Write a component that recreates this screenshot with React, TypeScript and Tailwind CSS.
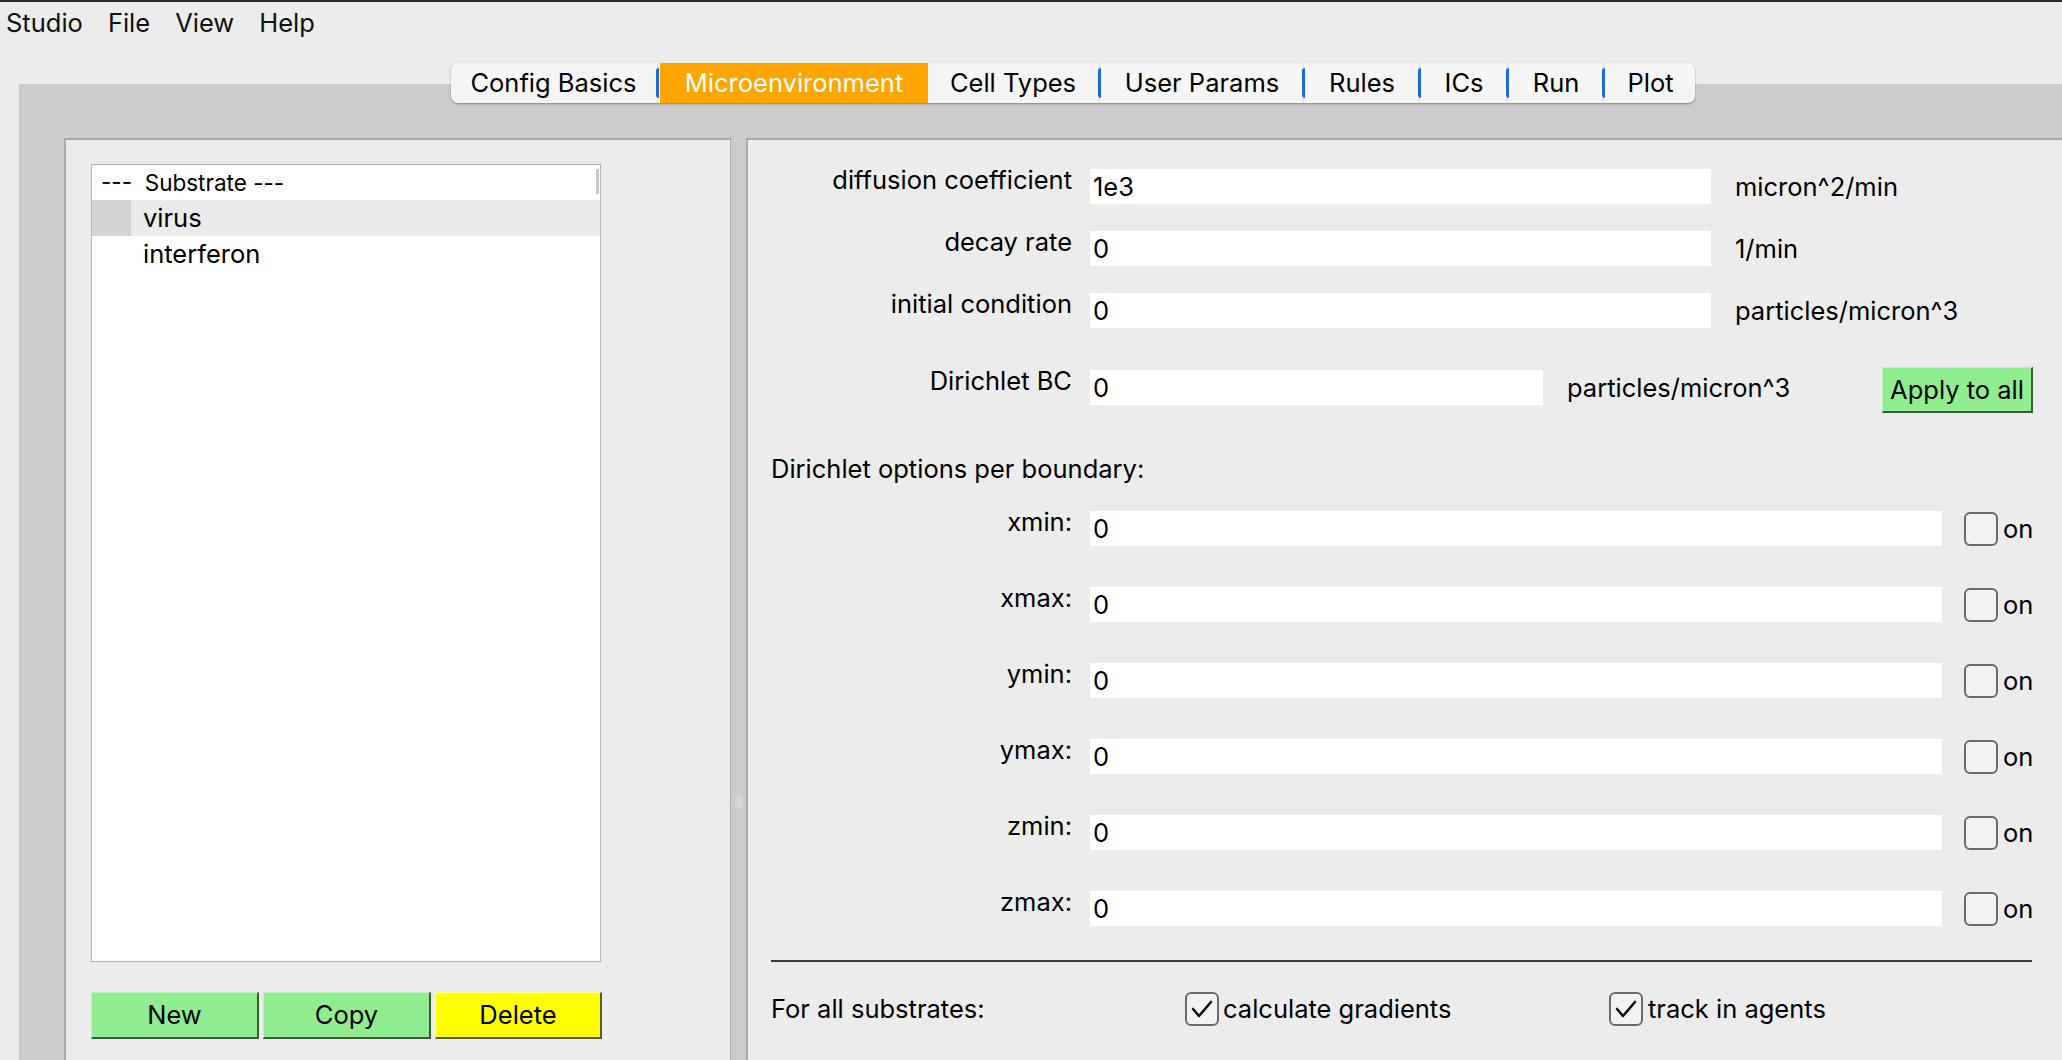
import React from "react";

function Sep() {
  return (
    <div className="w-[4px] h-full flex items-center relative">
      <div className="absolute left-[1px] top-0 bottom-0 w-px bg-[#dcdcdc]" />
      <div className="relative w-[3px] h-[30px] rounded-l-full bg-[#1d6ae0]" />
    </div>
  );
}

function Tab({ label, w, active }: { label: string; w: string; active?: boolean }) {
  return (
    <div
      className={
        "h-full flex items-center justify-center " +
        w +
        (active ? " bg-[#ffa500] text-white" : " text-black")
      }
    >
      {label}
    </div>
  );
}

function CheckBox({ checked }: { checked?: boolean }) {
  return (
    <div className="w-[34px] h-[34px] rounded-[6px] border-2 border-[#6a6a6a] bg-[#f2f2f2] flex items-center justify-center shrink-0">
      {checked ? (
        <svg width="26" height="26" viewBox="0 0 26 26">
          <polyline points="4,13 10,20 22,6" fill="none" stroke="#111" strokeWidth="2.6" strokeLinecap="round" strokeLinejoin="round" />
        </svg>
      ) : null}
    </div>
  );
}

function BoundaryRow({ label, first }: { label: string; first?: boolean }) {
  return (
    <div className={"flex items-start h-[35px] " + (first ? "mt-[28px]" : "mt-[41px]")}>
      <div className="w-[301px] text-right -mt-[3px]">{label}</div>
      <div className="ml-[18px] w-[852px] h-[35px] bg-white flex items-center pl-[3px]">0</div>
      <div className="ml-[22px] h-[35px] flex items-center">
        <CheckBox />
        <span className="ml-[5px]">on</span>
      </div>
    </div>
  );
}

export default function App() {
  return (
    <div className="w-[2062px] h-[1060px] overflow-hidden bg-[#ececec] text-black font-[family-name:Inter,'Liberation_Sans',sans-serif] text-[25.5px] leading-[28px] flex flex-col border-t-2 border-[#2b2b2b]">
      {/* Menu bar */}
      <div className="h-[61px] shrink-0 flex items-start pt-[7px] pl-[6px] gap-[25px] text-[#111]">
        <span>Studio</span>
        <span>File</span>
        <span>View</span>
        <span>Help</span>
      </div>

      {/* Tab bar */}
      <div className="relative z-10 h-[40px] -mb-[19px] shrink-0 pl-[451px] flex">
        <div className="flex h-[40px] rounded-[7px] bg-[#f5f5f5] shadow-[0_1px_2px_rgba(0,0,0,0.35)] overflow-hidden">
          <Tab label="Config Basics" w="w-[205px]" />
          <Sep />
          <Tab label="Microenvironment" w="w-[268px]" active />
          <Tab label="Cell Types" w="w-[170px]" />
          <Sep />
          <Tab label="User Params" w="w-[200px]" />
          <Sep />
          <Tab label="Rules" w="w-[112px]" />
          <Sep />
          <Tab label="ICs" w="w-[84px]" />
          <Sep />
          <Tab label="Run" w="w-[92px]" />
          <Sep />
          <Tab label="Plot" w="w-[89px]" />
        </div>
      </div>

      {/* Gray container */}
      <div className="flex-1 min-h-0 ml-[19px] bg-[#cbcbcb] pt-[54px] pl-[45px] flex">
        {/* Left panel */}
        <div className="w-[667px] shrink-0 bg-[#ececec] border-l-2 border-t-2 border-r border-[#a9a9a9] pt-[24px] pl-[25px] flex flex-col">
          <div className="w-[510px] h-[798px] bg-white border border-[#b3b3b3] flex flex-col">
            <div className="h-[35px] flex items-center pl-[9px] text-[22.5px] relative">
              <span>---&nbsp;&nbsp;Substrate ---</span>
              <div className="absolute right-[1px] top-[4px] w-[3px] h-[25px] bg-[#c6c6c6]" />
            </div>
            <div className="h-[36px] flex items-center bg-[#ebebeb]">
              <div className="w-[39px] h-full bg-[#d4d4d4]" />
              <span className="ml-[12px]">virus</span>
            </div>
            <div className="h-[36px] flex items-center pl-[51px]">interferon</div>
          </div>
          <div className="mt-[30px] flex gap-[4px]">
            <button className="w-[168px] h-[47px] bg-[#90ee90] border-t border-l border-[#b9f5b9] border-b-2 border-r-2 border-b-[#3a5a3a] border-r-[#3a5a3a] text-black">
              New
            </button>
            <button className="w-[168px] h-[47px] bg-[#90ee90] border-t border-l border-[#b9f5b9] border-b-2 border-r-2 border-b-[#3a5a3a] border-r-[#3a5a3a] text-black">
              Copy
            </button>
            <button className="w-[167px] h-[47px] bg-[#ffff00] border-t border-l border-[#ffff99] border-b-2 border-r-2 border-b-[#5c5c1a] border-r-[#5c5c1a] text-black">
              Delete
            </button>
          </div>
        </div>

        {/* Splitter */}
        <div className="w-[15px] shrink-0 flex flex-col items-center">
          <div className="mt-[657px] w-[8px] h-[13px] rounded-full bg-[#d8d8d8]" />
        </div>

        {/* Right panel */}
        <div className="flex-1 min-w-0 bg-[#ececec] border-l-2 border-t-2 border-[#a9a9a9] pl-[23px] flex flex-col">
          {/* diffusion */}
          <div className="flex items-start h-[35px] mt-[29px]">
            <div className="w-[301px] text-right -mt-[3px]">diffusion coefficient</div>
            <div className="ml-[18px] w-[621px] h-[35px] bg-white flex items-center pl-[3px]">1e3</div>
            <div className="ml-[24px] h-[35px] flex items-center">micron^2/min</div>
          </div>
          {/* decay */}
          <div className="flex items-start h-[35px] mt-[27px]">
            <div className="w-[301px] text-right -mt-[3px]">decay rate</div>
            <div className="ml-[18px] w-[621px] h-[35px] bg-white flex items-center pl-[3px]">0</div>
            <div className="ml-[24px] h-[35px] flex items-center">1/min</div>
          </div>
          {/* initial */}
          <div className="flex items-start h-[35px] mt-[27px]">
            <div className="w-[301px] text-right -mt-[3px]">initial condition</div>
            <div className="ml-[18px] w-[621px] h-[35px] bg-white flex items-center pl-[3px]">0</div>
            <div className="ml-[24px] h-[35px] flex items-center">particles/micron^3</div>
          </div>
          {/* Dirichlet BC */}
          <div className="flex items-start h-[46px] mt-[39px]">
            <div className="w-[301px] text-right">Dirichlet BC</div>
            <div className="ml-[18px] mt-[3px] w-[453px] h-[35px] bg-white flex items-center pl-[3px]">0</div>
            <div className="ml-[24px] mt-[3px] h-[35px] flex items-center">particles/micron^3</div>
            <button className="ml-auto mr-[29px] w-[151px] h-[46px] bg-[#90ee90] border-t border-l border-[#b9f5b9] border-b-2 border-r-2 border-b-[#3a5a3a] border-r-[#3a5a3a] text-black">
              Apply to all
            </button>
          </div>

          <div className="mt-[42px]">Dirichlet options per boundary:</div>

          <BoundaryRow label="xmin:" first />
          <BoundaryRow label="xmax:" />
          <BoundaryRow label="ymin:" />
          <BoundaryRow label="ymax:" />
          <BoundaryRow label="zmin:" />
          <BoundaryRow label="zmax:" />

          <div className="mt-[34px] w-[1261px] h-[2px] bg-[#3b3b3b]" />

          <div className="mt-[30px] h-[34px] flex items-center">
            <div className="w-[414px]">For all substrates:</div>
            <div className="w-[424px] flex items-center">
              <CheckBox checked />
              <span className="ml-[4px]">calculate gradients</span>
            </div>
            <div className="flex items-center">
              <CheckBox checked />
              <span className="ml-[5px]">track in agents</span>
            </div>
          </div>
        </div>
      </div>
    </div>
  );
}
